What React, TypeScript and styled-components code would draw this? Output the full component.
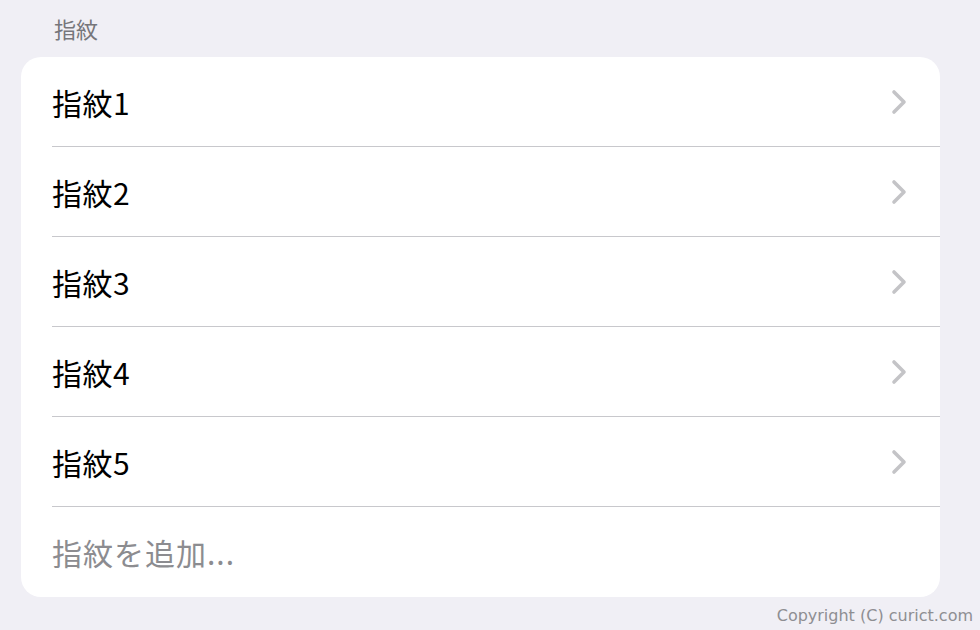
import styled, { createGlobalStyle } from 'styled-components';

const GlobalStyle = createGlobalStyle`
    html, body {
        margin: 0;
        padding: 0;
        background: #f0eff5;
        font-family: "Noto Sans CJK JP", "Noto Sans", sans-serif;
    }
`;

const Page = styled.div`
    width: 980px;
    height: 630px;
    box-sizing: border-box;
    padding: 10px 40px 0 21px;
    display: flex;
    flex-direction: column;
`;

const SectionTitle = styled.div`
    padding-left: 33px;
    height: 47px;
    font-size: 22px;
    line-height: 36px;
    color: #76767b;
`;

const Card = styled.div`
    background: #fff;
    border-radius: 20px;
    overflow: hidden;
`;

const Row = styled.div`
    height: 90px;
    padding-left: 31px;
    display: flex;
`;

const RowInner = styled.div<{ $last?: boolean }>`
    flex: 1;
    display: flex;
    align-items: center;
    justify-content: space-between;
    padding-right: 31px;
    border-bottom: ${p => (p.$last ? 'none' : '1px solid #c8c8cc')};
`;

const Label = styled.span<{ $muted?: boolean }>`
    font-size: 30px;
    color: ${p => (p.$muted ? '#8c8c90' : '#000')};
    letter-spacing: ${p => (p.$muted ? '1px' : '0.5px')};
`;

const Footer = styled.div`
    margin-top: 9px;
    margin-right: -33px;
    text-align: right;
    font-family: "DejaVu Sans", sans-serif;
    font-size: 16px;
    color: #8e8e92;
`;

const Chevron = () => (
    <svg width="18" height="26" viewBox="0 0 18 26">
        <path d="M3 3 L13 13 L3 23" fill="none" stroke="#c4c4c7" strokeWidth="3.6" strokeLinecap="round" strokeLinejoin="round" />
    </svg>
);

export default function App() {
    const prints = ['指紋1', '指紋2', '指紋3', '指紋4', '指紋5'];

    return (
        <>
            <GlobalStyle />
            <Page>
                <SectionTitle>指紋</SectionTitle>
                <Card>
                    {prints.map(name => (
                        <Row key={name}>
                            <RowInner>
                                <Label>{name}</Label>
                                <Chevron />
                            </RowInner>
                        </Row>
                    ))}
                    <Row>
                        <RowInner $last>
                            <Label $muted>指紋を追加...</Label>
                        </RowInner>
                    </Row>
                </Card>
                <Footer>Copyright (C) curict.com</Footer>
            </Page>
        </>
    )
}
